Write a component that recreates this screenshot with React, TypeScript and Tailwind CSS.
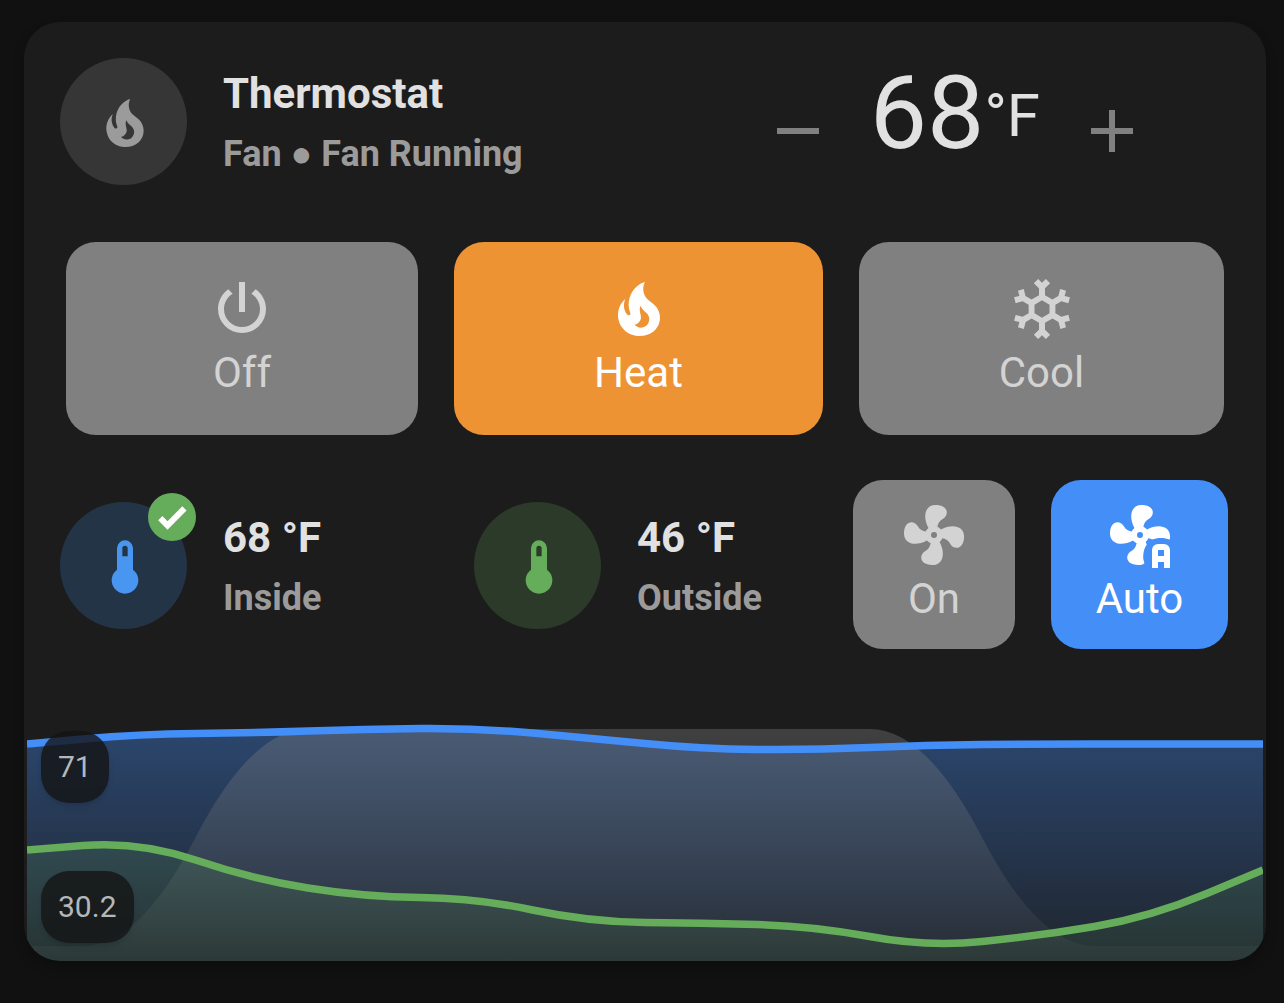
import React from "react";

const icons = {
  fire: "M17.66 11.2C17.43 10.9 17.15 10.64 16.89 10.38C16.22 9.78 15.46 9.35 14.82 8.72C13.33 7.26 13 4.85 13.95 3C13 3.23 12.17 3.75 11.46 4.32C8.87 6.4 7.85 10.07 9.07 13.22C9.11 13.32 9.15 13.42 9.15 13.55C9.15 13.77 9 13.97 8.8 14.05C8.57 14.15 8.33 14.09 8.14 13.93C8.08 13.88 8.04 13.83 8 13.76C6.87 12.33 6.69 10.28 7.45 8.64C5.78 10 4.87 12.3 5 14.47C5.06 14.97 5.12 15.47 5.29 15.97C5.43 16.57 5.7 17.17 6 17.7C7.08 19.43 8.95 20.67 10.96 20.92C13.1 21.19 15.39 20.8 17.03 19.32C18.86 17.66 19.5 15 18.56 12.72L18.43 12.46C18.22 12 17.66 11.2 17.66 11.2M14.5 17.5C14.22 17.74 13.76 18 13.4 18.1C12.28 18.5 11.16 17.94 10.5 17.28C11.69 17 12.4 16.12 12.61 15.23C12.78 14.43 12.46 13.77 12.33 13C12.21 12.26 12.23 11.63 12.5 10.94C12.69 11.32 12.89 11.7 13.13 12C13.9 13 15.11 13.44 15.37 14.8C15.41 14.94 15.43 15.08 15.43 15.23C15.46 16.05 15.1 16.95 14.5 17.5H14.5Z",
  power:
    "M16.56,5.44L15.11,6.89C16.84,7.94 18,9.83 18,12A6,6 0 0,1 12,18A6,6 0 0,1 6,12C6,9.83 7.16,7.94 8.88,6.88L7.44,5.44C5.36,6.88 4,9.28 4,12A8,8 0 0,0 12,20A8,8 0 0,0 20,12C20,9.28 18.64,6.88 16.56,5.44M13,3H11V13H13",
  snowflake:
    "M20.79,13.95L18.46,14.57L16.46,13.44V10.56L18.46,9.43L20.79,10.05L21.31,8.12L19.54,7.65L20,5.88L18.07,5.36L17.45,7.69L15.45,8.82L13,7.38V5.12L14.71,3.41L13.29,2L12,3.29L10.71,2L9.29,3.41L11,5.12V7.38L8.5,8.82L6.5,7.69L5.92,5.36L4,5.88L4.47,7.65L2.7,8.12L3.22,10.05L5.55,9.43L7.55,10.56V13.45L5.55,14.58L3.22,13.96L2.7,15.89L4.47,16.36L4,18.12L5.93,18.64L6.55,16.31L8.55,15.18L11,16.62V18.88L9.29,20.59L10.71,22L12,20.71L13.29,22L14.7,20.59L13,18.88V16.62L15.5,15.17L17.5,16.3L18.12,18.63L20,18.12L19.53,16.35L21.3,15.88L20.79,13.95M9.5,10.56L12,9.11L14.5,10.56V13.44L12,14.89L9.5,13.44V10.56Z",
  fan: "M12,11A1,1 0 0,0 11,12A1,1 0 0,0 12,13A1,1 0 0,0 13,12A1,1 0 0,0 12,11M12.5,2C17,2 17.11,5.57 14.75,6.75C13.76,7.24 13.32,8.29 13.13,9.22C13.61,9.42 14.03,9.73 14.35,10.13C18.05,8.13 22.03,8.92 22.03,12.5C22.03,17 18.46,17.1 17.28,14.73C16.78,13.74 15.72,13.3 14.79,13.11C14.59,13.59 14.28,14 13.88,14.34C15.87,18.03 15.08,22 11.5,22C7,22 6.91,18.42 9.27,17.24C10.25,16.75 10.69,15.71 10.89,14.79C10.4,14.59 9.97,14.27 9.65,13.87C5.96,15.85 2,15.07 2,11.5C2,7 5.56,6.89 6.74,9.26C7.24,10.25 8.29,10.68 9.22,10.87C9.41,10.39 9.73,9.97 10.14,9.65C8.15,5.96 8.94,2 12.5,2Z",
  thermometer:
    "M15 13V5A3 3 0 0 0 9 5V13A5 5 0 1 0 15 13M12 4A1 1 0 0 1 13 5V8H11V5A1 1 0 0 1 12 4Z",
  check:
    "M9,20.42L2.79,14.21L5.62,11.38L9,14.77L18.88,4.88L21.71,7.71L9,20.42Z",
  minus: "M19,13H5V11H19V13Z",
  plus: "M19,13H13V19H11V13H5V11H11V5H13V11H19V13Z",
};

function Icon({ name, className }: { name: keyof typeof icons; className: string }) {
  return (
    <svg viewBox="0 0 24 24" fill="currentColor" className={className} aria-hidden="true">
      <path fillRule="evenodd" d={icons[name]} />
    </svg>
  );
}

function FanAutoIcon({ className }: { className: string }) {
  return (
    <svg viewBox="0 0 24 24" fill="currentColor" className={className} aria-hidden="true">
      <mask id="fan-cut" maskUnits="userSpaceOnUse" x="0" y="0" width="24" height="24">
        <path fill="white" d="M0 0H24V24H0Z" />
        <path
          fill="black"
          d="M24 14L21.9 13.5C20.2 12.8 17.6 12.8 16.1 13.5C15 13.9 14.3 14.8 14.2 15.3C13.3 16.4 13 18.3 13.1 20L13.6 22V24H24Z"
        />
      </mask>
      <path mask="url(#fan-cut)" fillRule="evenodd" d={icons.fan} />
      <path
        fillRule="evenodd"
        d="M18 15H20A2 2 0 0 1 22 17V23H20V21H18V23H16V17A2 2 0 0 1 18 15M18 17V19H20V17Z"
      />
    </svg>
  );
}

function ModeButton({
  label,
  icon,
  className,
  pressed = false,
}: {
  label: string;
  icon: React.ReactNode;
  className: string;
  pressed?: boolean;
}) {
  return (
    <button
      type="button"
      aria-pressed={pressed}
      className={`flex flex-col items-center rounded-[30px] text-[42px] leading-[56px] ${className}`}
    >
      {icon}
      <span>{label}</span>
    </button>
  );
}

function Info({
  title,
  subtitle,
  circle,
  icon,
  badge,
}: {
  title: string;
  subtitle: string;
  circle: string;
  icon: keyof typeof icons;
  badge?: React.ReactNode;
}) {
  return (
    <div className="flex items-center gap-9">
      <div
        className={`relative flex size-[127px] shrink-0 items-center justify-center rounded-full pt-0.5 pl-0.5 ${circle}`}
      >
        <Icon name={icon} className="size-16" />
        {badge}
      </div>
      <div className="pt-1 leading-[60px] font-bold whitespace-nowrap">
        <div className="text-[42px] text-[#e1e1e1]">{title}</div>
        <div className="text-[36px] text-[#9b9b9b]">{subtitle}</div>
      </div>
    </div>
  );
}

const CHART_WIDTH = 1236;
const CHART_HEIGHT = 237;

/* One vertical position per time slot, evenly spaced across the chart. */
const insideTemps = [20, 10, 9, 5, 4, 14, 25, 26, 21, 20, 20, 20];
const outsideTemps = [126, 117, 155, 173, 174, 198, 199, 202, 223, 212, 193, 146];
const running = [222, 222, 5, 5, 5, 5, 5, 5, 5, 222, 222, 222];

/* Quadratic curve through the midpoints between neighbouring samples. */
function curve(values: number[]): string {
  const step = CHART_WIDTH / (values.length - 1);
  let path = `M0 ${values[0]}`;
  for (let i = 1; i < values.length; i++) {
    const midX = (i - 0.5) * step;
    const midY = (values[i - 1] + values[i]) / 2;
    path += i === 1 ? `L${midX} ${midY}` : `Q${(i - 1) * step} ${values[i - 1]} ${midX} ${midY}`;
  }
  return `${path}L${CHART_WIDTH} ${values[values.length - 1]}`;
}

function area(values: number[]): string {
  return `${curve(values)}V${CHART_HEIGHT}H0Z`;
}

function Gradient({ id, color, from, to }: { id: string; color: string; from: number; to: number }) {
  return (
    <linearGradient id={id} gradientUnits="userSpaceOnUse" x1="0" y1="5" x2="0" y2={CHART_HEIGHT}>
      <stop offset="0" stopColor={color} stopOpacity={from} />
      <stop offset="1" stopColor={color} stopOpacity={to} />
    </linearGradient>
  );
}

function History() {
  return (
    <div className="relative mx-[3px]">
      <svg
        viewBox={`0 0 ${CHART_WIDTH} ${CHART_HEIGHT}`}
        preserveAspectRatio="none"
        className="block h-[237px] w-full"
        role="img"
        aria-label="Temperature history"
      >
        <defs>
          <Gradient id="inside-fill" color="#448ef8" from={0.37} to={0.08} />
          <Gradient id="outside-fill" color="#66ad5b" from={0.24} to={0.1} />
          <Gradient id="running-fill" color="#808080" from={0.36} to={0.07} />
        </defs>
        <path d={area(insideTemps)} fill="url(#inside-fill)" />
        <path d={area(running)} fill="url(#running-fill)" />
        <path d={area(outsideTemps)} fill="url(#outside-fill)" />
        <path d={curve(insideTemps)} fill="none" stroke="#448ef8" strokeWidth="7.5" />
        <path d={curve(outsideTemps)} fill="none" stroke="#66ad5b" strokeWidth="7.5" />
      </svg>
      <div className="absolute inset-y-0 left-3.5 flex flex-col items-start justify-between pt-[7px] pb-[18px] text-[30px] leading-[72px] text-[#b4b8bb]">
        <span className="rounded-[28px] bg-[#141414]/80 px-[17px] shadow-md">71</span>
        <span className="rounded-[28px] bg-[#141414]/80 px-[17px] shadow-md">30.2</span>
      </div>
    </div>
  );
}

export default function App() {
  return (
    <main className="min-h-screen bg-[#111111] pt-[22px] pr-[18px] pb-[42px] pl-6 font-[Roboto,sans-serif]">
      <section className="overflow-hidden rounded-[36px] bg-[#1c1c1c] pt-9 shadow-[0_6px_12px_rgba(0,0,0,0.25)]">
        <header className="flex items-center justify-between pr-[118px] pl-9">
          <Info title="Thermostat" subtitle="Fan ● Fan Running" circle="bg-[#363636] text-[#9b9b9b]" icon="fire" />
          <div className="flex items-center gap-9 text-[#808080]">
            <button type="button" aria-label="Decrease temperature" className="mt-[18px]">
              <Icon name="minus" className="size-[72px]" />
            </button>
            <div className="mb-[18px] flex items-start leading-none text-[#e1e1e1]">
              <span className="text-[102px]">68</span>
              <span className="pt-6 text-[60px]">°F</span>
            </div>
            <button type="button" aria-label="Increase temperature" className="mt-[18px]">
              <Icon name="plus" className="size-[72px]" />
            </button>
          </div>
        </header>

        <div className="mt-[57px] grid grid-cols-[352fr_369fr_365fr] gap-9 px-[42px]">
          <ModeButton
            label="Off"
            icon={<Icon name="power" className="size-[72px]" />}
            className="bg-[#808080] pt-[31px] pb-[34px] text-[#d3d3d3]"
          />
          <ModeButton
            label="Heat"
            pressed
            icon={<Icon name="fire" className="size-[72px]" />}
            className="bg-[#ee9334] pt-[31px] pb-[34px] text-white"
          />
          <ModeButton
            label="Cool"
            icon={<Icon name="snowflake" className="size-[72px]" />}
            className="bg-[#808080] pt-[31px] pb-[34px] text-[#d3d3d3]"
          />
        </div>

        <div className="mt-[45px] flex items-center gap-9 pr-[38px] pl-9">
          <div className="grid flex-1 grid-cols-[414fr_343fr] pt-0.5">
            <Info
              title="68 °F"
              subtitle="Inside"
              circle="bg-[#233446] text-[#4896ef]"
              icon="thermometer"
              badge={
                <span className="absolute -top-[9px] -right-[9px] flex size-12 items-center justify-center rounded-full bg-[#66ad5b] text-white">
                  <Icon name="check" className="size-9" />
                </span>
              }
            />
            <Info title="46 °F" subtitle="Outside" circle="bg-[#2c3a29] text-[#66ad5b]" icon="thermometer" />
          </div>
          <ModeButton
            label="On"
            icon={<Icon name="fan" className="size-[72px]" />}
            className="w-[162px] bg-[#808080] pt-[19px] pb-[22px] text-[#d3d3d3]"
          />
          <ModeButton
            label="Auto"
            pressed
            icon={<FanAutoIcon className="size-[72px]" />}
            className="w-[177px] bg-[#448ef8] pt-[19px] pb-[22px] text-white"
          />
        </div>

        <div className="mt-[75px]">
          <History />
        </div>
      </section>
    </main>
  );
}
